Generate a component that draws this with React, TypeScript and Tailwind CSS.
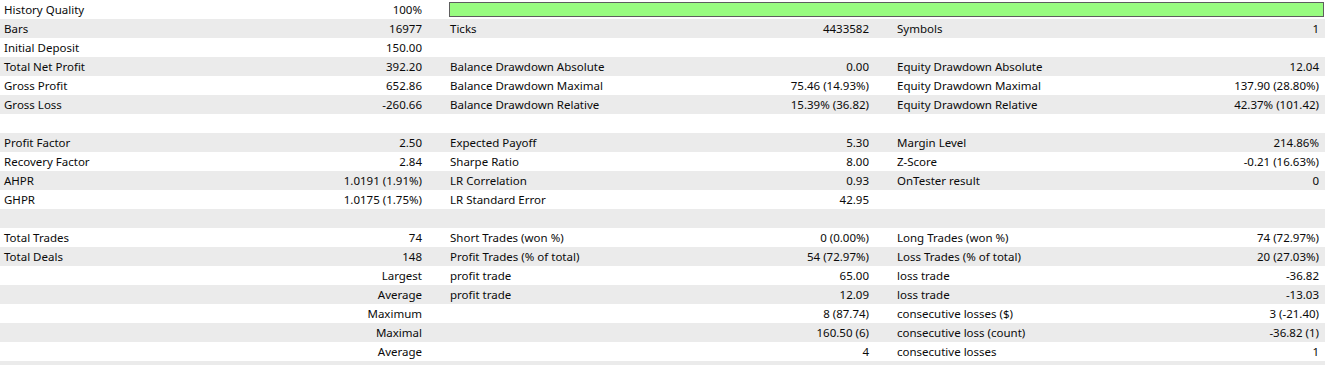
type Cell = [string, string]

const rows: Cell[][] = [
  [['History Quality', '100%']],
  [['Bars', '16977'], ['Ticks', '4433582'], ['Symbols', '1']],
  [['Initial Deposit', '150.00'], ['', ''], ['', '']],
  [['Total Net Profit', '392.20'], ['Balance Drawdown Absolute', '0.00'], ['Equity Drawdown Absolute', '12.04']],
  [['Gross Profit', '652.86'], ['Balance Drawdown Maximal', '75.46 (14.93%)'], ['Equity Drawdown Maximal', '137.90 (28.80%)']],
  [['Gross Loss', '-260.66'], ['Balance Drawdown Relative', '15.39% (36.82)'], ['Equity Drawdown Relative', '42.37% (101.42)']],
  [['', ''], ['', ''], ['', '']],
  [['Profit Factor', '2.50'], ['Expected Payoff', '5.30'], ['Margin Level', '214.86%']],
  [['Recovery Factor', '2.84'], ['Sharpe Ratio', '8.00'], ['Z-Score', '-0.21 (16.63%)']],
  [['AHPR', '1.0191 (1.91%)'], ['LR Correlation', '0.93'], ['OnTester result', '0']],
  [['GHPR', '1.0175 (1.75%)'], ['LR Standard Error', '42.95'], ['', '']],
  [['', ''], ['', ''], ['', '']],
  [['Total Trades', '74'], ['Short Trades (won %)', '0 (0.00%)'], ['Long Trades (won %)', '74 (72.97%)']],
  [['Total Deals', '148'], ['Profit Trades (% of total)', '54 (72.97%)'], ['Loss Trades (% of total)', '20 (27.03%)']],
  [['', 'Largest'], ['profit trade', '65.00'], ['loss trade', '-36.82']],
  [['', 'Average'], ['profit trade', '12.09'], ['loss trade', '-13.03']],
  [['', 'Maximum'], ['', '8 (87.74)'], ['consecutive losses ($)', '3 (-21.40)']],
  [['', 'Maximal'], ['', '160.50 (6)'], ['consecutive loss (count)', '-36.82 (1)']],
  [['', 'Average'], ['', '4'], ['consecutive losses', '1']],
  [['', ''], ['', ''], ['', '']],
]

const colCls = [
  'w-[447px] pl-1 pr-[25px]',
  'w-[447px] pl-[3px] pr-[25px]',
  'w-[431px] pl-[3px] pr-[6px]',
]

export default function App() {
  return (
    <div
      className="w-[1328px] h-[365px] overflow-hidden bg-white text-[11.5px] text-[#0a0a0a] leading-[19px]"
      style={{ fontFamily: '"Noto Sans", "Open Sans", sans-serif' }}
    >
      {rows.map((row, i) => (
        <div key={i} className={`flex h-[19px] w-[1325px] ${i % 2 === 1 ? 'bg-[#ebebeb]' : 'bg-white'}`}>
          {row.map((c, j) => (
            <div key={j} className={`flex justify-between whitespace-nowrap ${colCls[j]}`}>
              <span>{c[0]}</span>
              <span>{c[1]}</span>
            </div>
          ))}
          {i === 0 && (
            <div className="flex-1 pl-[2px] pt-[2px] pr-[1px]">
              <div className="h-[15px] border-[1.5px] border-[#5e5e5e] bg-[#98fc80]" />
            </div>
          )}
        </div>
      ))}
    </div>
  )
}
